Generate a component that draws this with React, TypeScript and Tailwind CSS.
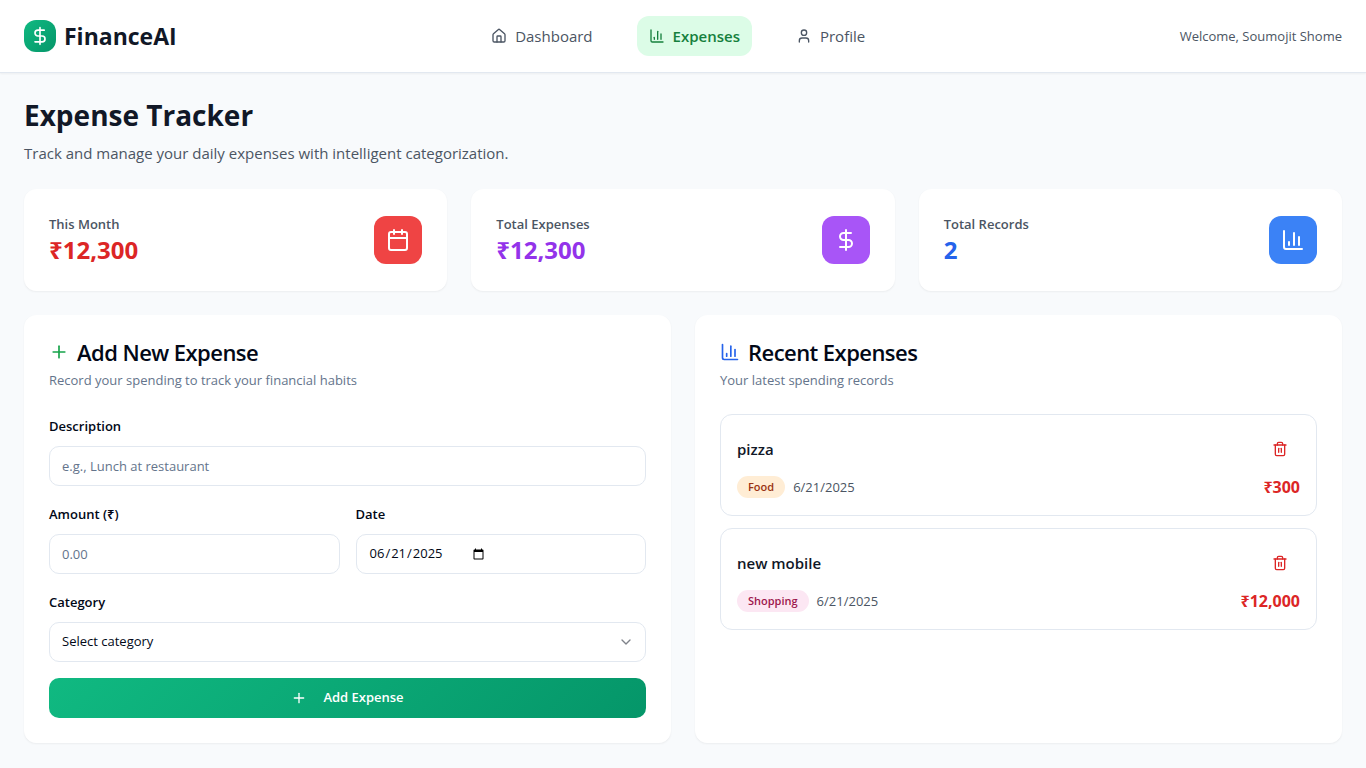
import { useState } from "react";
import type { ReactNode } from "react";
import {
  Calendar,
  ChartColumn,
  ChevronDown,
  DollarSign,
  House,
  Plus,
  Trash2,
  User,
} from "lucide-react";
import type { LucideIcon } from "lucide-react";

type Expense = {
  id: number;
  description: string;
  category: string;
  date: string;
  amount: number;
};

const expenses: Expense[] = [
  { id: 1, description: "pizza", category: "Food", date: "6/21/2025", amount: 300 },
  { id: 2, description: "new mobile", category: "Shopping", date: "6/21/2025", amount: 12000 },
];

const categories = ["Food", "Shopping", "Transport", "Bills", "Other"];

const badgeStyles: Record<string, string> = {
  Food: "bg-[#ffedd5] text-[#9a3412]",
  Shopping: "bg-[#fce7f3] text-[#9d174d]",
};

const rupees = (value: number) => `₹${value.toLocaleString("en-US")}`;

const fieldClass =
  "h-10 w-full rounded-[10px] border border-[#e2e8f0] bg-white px-3 text-[13px] text-[#020817] placeholder:text-[#64748b]";

function NavLink({ icon: Icon, label, active }: { icon: LucideIcon; label: string; active?: boolean }) {
  return (
    <a
      href="#"
      aria-current={active ? "page" : undefined}
      className={
        active
          ? "flex items-center gap-2 rounded-xl bg-[#dcfce7] px-3 py-2 text-[15px] leading-6 font-semibold text-[#15803d]"
          : "flex items-center gap-2 rounded-xl px-3 py-2 text-[15px] leading-6 text-[#4b5563]"
      }
    >
      <Icon className="size-4" />
      <span>{label}</span>
    </a>
  );
}

function StatCard({
  label,
  value,
  valueClass,
  iconClass,
  icon: Icon,
}: {
  label: string;
  value: string;
  valueClass: string;
  iconClass: string;
  icon: LucideIcon;
}) {
  return (
    <section className="flex items-center justify-between rounded-xl border border-white bg-white p-6 shadow-xs">
      <div>
        <p className="text-[13px] leading-5 font-semibold text-[#4b5563]">{label}</p>
        <p className={`text-[24px] leading-8 font-bold ${valueClass}`}>{value}</p>
      </div>
      <div className={`flex size-12 items-center justify-center rounded-xl text-white ${iconClass}`}>
        <Icon className="size-6" />
      </div>
    </section>
  );
}

function Panel({ icon, title, subtitle, children }: { icon: ReactNode; title: string; subtitle: string; children: ReactNode }) {
  return (
    <section className="rounded-xl border border-white bg-white p-6 shadow-xs">
      <h2 className="flex items-center gap-2 text-[22px] leading-6 font-semibold tracking-tight text-[#020817]">
        {icon}
        {title}
      </h2>
      <p className="mt-1.5 mb-6 text-[13px] leading-5 text-[#64748b]">{subtitle}</p>
      {children}
    </section>
  );
}

function Field({ id, label, children }: { id: string; label: string; children: ReactNode }) {
  return (
    <div className="space-y-2">
      <label htmlFor={id} className="block text-[13px] leading-6 font-semibold text-[#020817]">
        {label}
      </label>
      {children}
    </div>
  );
}

function ExpenseForm() {
  const [date, setDate] = useState("2025-06-21");
  return (
    <form className="space-y-4" onSubmit={(event) => event.preventDefault()}>
      <Field id="description" label="Description">
        <input id="description" type="text" placeholder="e.g., Lunch at restaurant" className={fieldClass} />
      </Field>
      <div className="grid grid-cols-2 gap-4">
        <Field id="amount" label="Amount (₹)">
          <input id="amount" type="number" placeholder="0.00" step="0.01" className={fieldClass} />
        </Field>
        <Field id="date" label="Date">
          <input
            id="date"
            type="date"
            value={date}
            onChange={(event) => setDate(event.target.value)}
            className={`flex ${fieldClass}`}
          />
        </Field>
      </div>
      <Field id="category" label="Category">
        <div className="relative">
          <select id="category" defaultValue="" className={`appearance-none ${fieldClass}`}>
            <option value="">Select category</option>
            {categories.map((category) => (
              <option key={category}>{category}</option>
            ))}
          </select>
          <ChevronDown className="pointer-events-none absolute inset-y-3 right-3 size-4 opacity-50" />
        </div>
      </Field>
      <button
        type="submit"
        className="flex h-10 w-full items-center justify-center gap-4 rounded-[10px] bg-[linear-gradient(135deg,#10b981_0%,#059669_100%)] text-[13px] font-semibold text-white"
      >
        <Plus className="size-4" />
        Add Expense
      </button>
    </form>
  );
}

function ExpenseItem({ expense }: { expense: Expense }) {
  return (
    <li className="space-y-2 rounded-xl border border-[#e2e8f0] p-4">
      <div className="flex items-center justify-between">
        <h3 className="text-[15px] leading-6 font-semibold text-[#111827]">{expense.description}</h3>
        <button
          type="button"
          aria-label={`Delete ${expense.description}`}
          className="flex h-9 items-center justify-center rounded-[10px] px-3 text-[#dc2626]"
        >
          <Trash2 className="size-4" />
        </button>
      </div>
      <div className="flex items-center justify-between">
        <div className="flex items-center gap-2">
          <span
            className={`rounded-full border border-transparent px-2.5 py-0.5 text-[11px] leading-4 font-semibold ${badgeStyles[expense.category]}`}
          >
            {expense.category}
          </span>
          <span className="text-[13px] leading-5 text-[#4b5563]">{expense.date}</span>
        </div>
        <span className="text-[16px] leading-6 font-bold text-[#dc2626]">{rupees(expense.amount)}</span>
      </div>
    </li>
  );
}

export default function App() {
  const total = expenses.reduce((sum, expense) => sum + expense.amount, 0);
  return (
    <div className="min-h-screen bg-[#f8fafc] font-['Open_Sans','Noto_Sans',sans-serif] text-[#020817]">
      <header className="flex items-center justify-between border-b border-[#e2e8f0] bg-white px-6 py-4 shadow-xs">
        <a href="#" className="flex items-center gap-2">
          <span className="flex size-8 items-center justify-center rounded-xl bg-[linear-gradient(135deg,#10b981_0%,#059669_100%)] text-white">
            <DollarSign className="size-5" />
          </span>
          <span className="text-[23px] leading-8 font-bold text-[#111827]">FinanceAI</span>
        </a>
        <nav className="flex items-center gap-8">
          <NavLink icon={House} label="Dashboard" />
          <NavLink icon={ChartColumn} label="Expenses" active />
          <NavLink icon={User} label="Profile" />
        </nav>
        <span className="text-[13px] leading-5 text-[#4b5563]">Welcome, Soumojit Shome</span>
      </header>

      <main className="space-y-6 p-6">
        <div>
          <h1 className="text-[28px] leading-9 font-bold text-[#111827]">Expense Tracker</h1>
          <p className="mt-2 text-[15px] leading-6 text-[#4b5563]">
            Track and manage your daily expenses with intelligent categorization.
          </p>
        </div>

        <div className="grid grid-cols-1 gap-6 md:grid-cols-3">
          <StatCard label="This Month" value={rupees(total)} valueClass="text-[#dc2626]" iconClass="bg-[#ef4444]" icon={Calendar} />
          <StatCard label="Total Expenses" value={rupees(total)} valueClass="text-[#9333ea]" iconClass="bg-[#a855f7]" icon={DollarSign} />
          <StatCard label="Total Records" value={String(expenses.length)} valueClass="text-[#2563eb]" iconClass="bg-[#3b82f6]" icon={ChartColumn} />
        </div>

        <div className="grid grid-cols-1 gap-6 lg:grid-cols-2">
          <Panel
            icon={<Plus className="size-5 text-[#16a34a]" />}
            title="Add New Expense"
            subtitle="Record your spending to track your financial habits"
          >
            <ExpenseForm />
          </Panel>
          <Panel
            icon={<ChartColumn className="size-5 text-[#2563eb]" />}
            title="Recent Expenses"
            subtitle="Your latest spending records"
          >
            <ul className="space-y-3">
              {expenses.map((expense) => (
                <ExpenseItem key={expense.id} expense={expense} />
              ))}
            </ul>
          </Panel>
        </div>
      </main>
    </div>
  );
}
